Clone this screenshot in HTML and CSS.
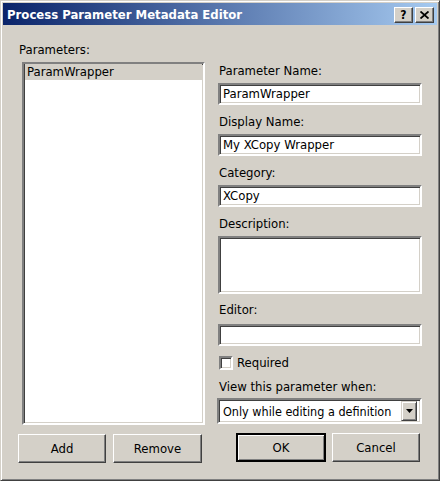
FILE: index.html
```html
<!DOCTYPE html>
<html>
<head>
<meta charset="utf-8">
<link rel="stylesheet" href="styles.css">
</head>
<body>
<div class="window">
  <div class="titlebar">
    <span class="title">Process Parameter Metadata Editor</span>
    <div class="tbuttons">
      <span class="tbtn">?</span>
      <span class="tbtn">
        <svg width="9" height="8" viewBox="0 0 9 8"><path d="M0.5 0.5 L8.5 7.5 M8.5 0.5 L0.5 7.5" stroke="#000" stroke-width="1.8"/></svg>
      </span>
    </div>
  </div>
  <div class="body">
    <div class="left">
      <div class="label lp">Parameters:</div>
      <div class="listbox">
        <div class="item">ParamWrapper</div>
      </div>
      <div class="buttons">
        <button class="btn">Add</button>
        <button class="btn wide">Remove</button>
      </div>
    </div>
    <div class="right">
      <div class="label">Parameter Name:</div>
      <div class="input">ParamWrapper</div>
      <div class="label">Display Name:</div>
      <div class="input">My XCopy Wrapper</div>
      <div class="label">Category:</div>
      <div class="input">XCopy</div>
      <div class="label">Description:</div>
      <div class="input area"></div>
      <div class="label le">Editor:</div>
      <div class="input ed"></div>
      <div class="check"><span class="box"></span>Required</div>
      <div class="label lv">View this parameter when:</div>
      <div class="select"><span class="seltext">Only while editing a definition</span><span class="arrow"><svg width="7" height="4" viewBox="0 0 7 4"><path d="M0 0 H7 L3.5 4 Z" fill="#000"/></svg></span></div>
      <div class="buttons rb">
        <button class="btn default">OK</button>
        <button class="btn">Cancel</button>
      </div>
    </div>
  </div>
</div>
</body>
</html>
```
FILE: styles.css
```css
html, body { margin: 0; padding: 0; background: #ffffff; }
body {
  font-family: "DejaVu Sans Condensed", "DejaVu Sans", Tahoma, sans-serif;
  font-stretch: condensed;
  font-size: 13px; color: #000;
}
.window {
  box-sizing: border-box;
  width: 440px; height: 481px;
  background: #d4d0c8;
  border: 1px solid; border-color: #d4d0c8 #404040 #404040 #d4d0c8;
  box-shadow: inset 1px 1px 0 #ffffff, inset -1px -1px 0 #808080;
  padding: 2px;
  display: flex; flex-direction: column;
}
.titlebar {
  flex-shrink: 0;
  height: 22px;
  background: linear-gradient(to right, #0a246a 0%, #a6caf0 100%);
  display: flex; align-items: center; justify-content: space-between;
  padding: 0 3px 0 4px;
}
.title { color: #fff; font-weight: bold; font-size: 13px; }
.tbuttons { display: flex; gap: 2px; margin-top: 1px; }
.tbtn {
  box-sizing: border-box;
  width: 19px; height: 16px;
  background: #d4d0c8;
  border: 1px solid; border-color: #fff #404040 #404040 #fff;
  box-shadow: inset -1px -1px 0 #808080;
  display: flex; align-items: center; justify-content: center;
  font-weight: bold; font-size: 12px; line-height: 1;
}
.body { display: flex; padding: 17px 0 0 15px; gap: 12px; flex: 1; }
.left { width: 188px; display: flex; flex-direction: column; }
.right { width: 205px; display: flex; flex-direction: column; padding-top: 21px; }
.label { flex-shrink: 0; height: 15px; line-height: 15px; margin-bottom: 5px; padding-left: 1px; }
.listbox {
  flex-shrink: 0;
  box-sizing: border-box;
  margin-left: 4px; width: 183px; height: 363px;
  background: #fff;
  border: 2px solid; border-color: #808080 #fff #fff #808080;
  box-shadow: inset 1px 1px 0 #404040, inset -1px -1px 0 #d4d0c8;
  padding: 0 1px;
}
.item { background: #d4d0c8; height: 16px; line-height: 16px; padding-left: 2px; }
.buttons { flex-shrink: 0; display: flex; gap: 7px; margin-top: 9px; }
.btn {
  box-sizing: border-box;
  width: 88px; height: 29px;
  background: #d4d0c8; color: #000;
  font-family: inherit; font-stretch: condensed; font-size: 13px;
  border: 1px solid; border-color: #fff #404040 #404040 #fff;
  box-shadow: inset -1px -1px 0 #808080, inset 1px 1px 0 #d4d0c8;
  padding: 0;
}
.btn.wide { width: 89px; }
.btn.default { width: 90px; border: 2px solid #000; box-shadow: inset 1px 1px 0 #fff, inset -1px -1px 0 #808080; }
.input {
  flex-shrink: 0;
  box-sizing: border-box;
  width: 204px; height: 22px; background: #fff;
  border: 2px solid; border-color: #808080 #fff #fff #808080;
  box-shadow: inset 1px 1px 0 #404040, inset -1px -1px 0 #d4d0c8;
  line-height: 18px; padding-left: 3px;
  margin-bottom: 9px;
}
.area { height: 58px; margin-bottom: 8px; }
.le { margin-bottom: 7px; }
.ed { height: 22px; margin-bottom: 9px; }
.check { flex-shrink: 0; display: flex; align-items: center; height: 15px; margin: 0 0 9px 1px; gap: 4px; }
.box {
  box-sizing: border-box; width: 14px; height: 14px; background: #fff;
  border: 2px solid; border-color: #808080 #fff #fff #808080;
  box-shadow: inset 1px 1px 0 #404040, inset -1px -1px 0 #d4d0c8;
}
.lv { margin-bottom: 4px; }
.select {
  flex-shrink: 0;
  box-sizing: border-box;
  width: 205px; margin-left: -1px;
  height: 26px; background: #fff;
  border: 2px solid; border-color: #808080 #fff #fff #808080;
  box-shadow: inset 1px 1px 0 #404040, inset -1px -1px 0 #d4d0c8;
  display: flex; align-items: center; justify-content: space-between;
  padding: 1px 3px 1px 1px;
  white-space: nowrap;
}
.seltext { padding-left: 3px; font-size: 12.5px; }
.arrow {
  box-sizing: border-box; width: 16px; height: 20px;
  background: #d4d0c8;
  border: 1px solid; border-color: #d4d0c8 #404040 #404040 #d4d0c8;
  box-shadow: inset 1px 1px 0 #fff, inset -1px -1px 0 #808080;
  display: flex; align-items: center; justify-content: center;
}
.rb { margin-top: 9px; margin-left: 18px; gap: 6px; }
```
